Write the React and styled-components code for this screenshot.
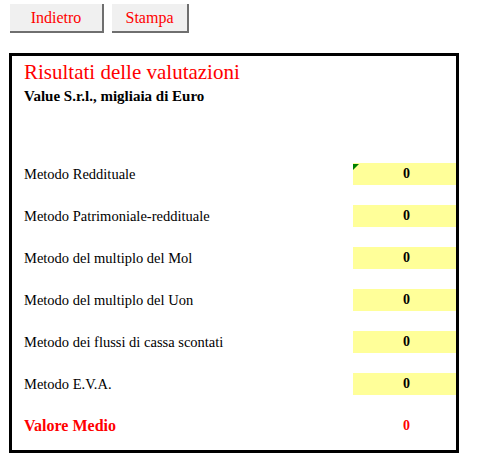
import styled, { createGlobalStyle } from "styled-components";

const GlobalStyle = createGlobalStyle`
  body {
    margin: 0;
    background: #ffffff;
    font-family: "Liberation Serif", "Times New Roman", serif;
  }
`;

const Page = styled.div`
  padding: 4px 0 0 9px;
`;

const Toolbar = styled.div`
  display: flex;
  gap: 8px;
  padding-left: 1px;
`;

const ToolButton = styled.button`
  width: ${(props) => props.width}px;
  height: 29px;
  padding: 0;
  background-color: #f0f0f0;
  border: none;
  border-right: 2px solid #6f6f6f;
  border-bottom: 2px solid #6f6f6f;
  color: #ff0000;
  font-family: "Liberation Serif", "Times New Roman", serif;
  font-size: 16px;
  cursor: pointer;
`;

const Panel = styled.div`
  margin-top: 20px;
  border: 3px solid #000000;
  padding: 4px 0 2.5px 12px;
  box-sizing: content-box;
  width: 432px;
`;

const Header = styled.div`
  margin-bottom: 48px;
`;

const Title = styled.div`
  color: #ff0000;
  font-size: 21px;
  line-height: 24px;
`;

const Subtitle = styled.div`
  margin-top: 3px;
  font-size: 15px;
  line-height: 18px;
  font-weight: bold;
  color: #000000;
`;

const Row = styled.div`
  display: grid;
  grid-template-columns: 1fr 103px;
  align-items: center;
  height: 42px;
`;

const Label = styled.div`
  font-size: ${(props) => (props.total ? "16px" : "14.5px")};
  font-weight: ${(props) => (props.total ? "bold" : "normal")};
  color: ${(props) => (props.total ? "#ff0000" : "#000000")};
`;

const Value = styled.div`
  position: relative;
  height: 22px;
  display: flex;
  align-items: center;
  justify-content: center;
  padding-left: 4px;
  background-color: ${(props) => (props.total ? "transparent" : "#ffff99")};
  color: ${(props) => (props.total ? "#ff0000" : "#000000")};
  font-size: 14px;
  font-weight: bold;

  &::before {
    content: "";
    display: ${(props) => (props.flag ? "block" : "none")};
    position: absolute;
    top: 1px;
    left: 0;
    border-top: 6px solid #008000;
    border-right: 6px solid transparent;
  }
`;

const methods = [
  "Metodo Reddituale",
  "Metodo Patrimoniale-reddituale",
  "Metodo del multiplo del Mol",
  "Metodo del multiplo del Uon",
  "Metodo dei flussi di cassa scontati",
  "Metodo E.V.A.",
];

const App = () => {
  return (
    <Page>
      <GlobalStyle />
      <Toolbar>
        <ToolButton width={94}>Indietro</ToolButton>
        <ToolButton width={77}>Stampa</ToolButton>
      </Toolbar>
      <Panel>
        <Header>
          <Title>Risultati delle valutazioni</Title>
          <Subtitle>Value S.r.l., migliaia di Euro</Subtitle>
        </Header>
        {methods.map((m, i) => (
          <Row key={m}>
            <Label>{m}</Label>
            <Value flag={i === 0}>0</Value>
          </Row>
        ))}
        <Row>
          <Label total>Valore Medio</Label>
          <Value total>0</Value>
        </Row>
      </Panel>
    </Page>
  );
};

export default App;
